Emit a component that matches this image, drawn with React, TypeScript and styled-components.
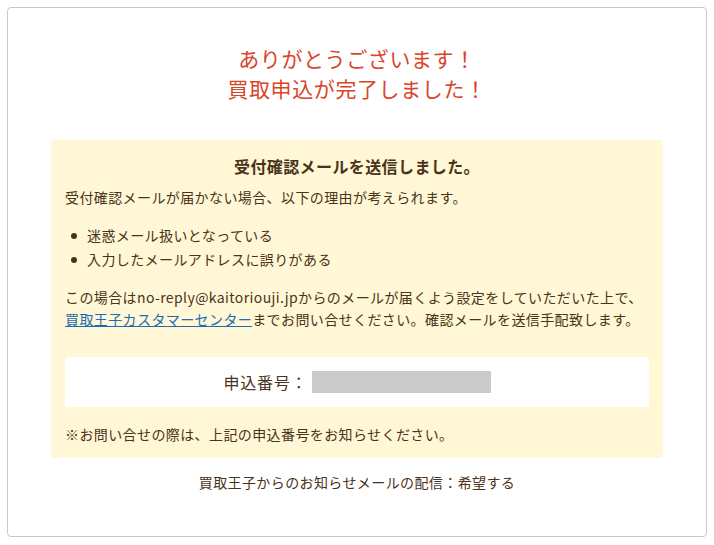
import * as React from 'react'
import styled, { createGlobalStyle } from 'styled-components'

const GlobalStyle = createGlobalStyle`
  body {
    margin: 0;
    background: #fff;
    font-family: "Noto Sans CJK JP", "Noto Sans", sans-serif;
    color: #4a3319;
  }
`

const Page = styled.div`
  padding: 7px;
`

const Card = styled.div`
  width: 698px;
  border: solid 1px #c8c8c8;
  border-radius: 4px;
  padding: 35px 0 43px;
  text-align: center;
  letter-spacing: 0.4px;
`

const Title = styled.h1`
  margin: 0;
  font-size: 21px;
  font-weight: normal;
  line-height: 30px;
  letter-spacing: 0.6px;
  color: #d9452b;
`

const Notice = styled.div`
  margin: 37px 43px 0;
  padding: 14px 14px 13px;
  background: #fff7d6;
  border-radius: 4px;
  text-align: left;
`

const NoticeHeading = styled.h2`
  margin: 0 0 8px;
  font-size: 16px;
  font-weight: bold;
  line-height: 24px;
  text-align: center;
`

const Text = styled.p<{ $gap?: number }>`
  margin: ${(p) => p.$gap ?? 0}px 0 0;
  font-size: 14px;
  line-height: 22px;
  white-space: nowrap;
`

const Reasons = styled.ul`
  margin: 15px 0 0;
  padding: 0;
  list-style: none;
`

const Reason = styled.li`
  position: relative;
  padding-left: 22px;
  font-size: 14px;
  line-height: 24px;

  &::before {
    content: '';
    position: absolute;
    left: 6px;
    top: 10px;
    width: 6px;
    height: 6px;
    border-radius: 50%;
    background: #4a3319;
  }
`

const Link = styled.a`
  color: #1a6db3;
  text-decoration: underline;
`

const NumberBox = styled.div`
  margin-top: 27px;
  height: 50px;
  background: #fff;
  border-radius: 2px;
  display: flex;
  align-items: center;
  justify-content: center;
  font-size: 16px;
  letter-spacing: 0.8px;
`

const Masked = styled.span`
  display: inline-block;
  width: 179px;
  height: 22px;
  margin-left: 4px;
  background: #cbcbcb;
`

const Footer = styled.p`
  margin: 13px 0 0;
  font-size: 14px;
  line-height: 22px;
`

export default function App() {
  return (
    <Page>
      <GlobalStyle />
      <Card>
        <Title>
          ありがとうございます！
          <br />
          買取申込が完了しました！
        </Title>
        <Notice>
          <NoticeHeading>受付確認メールを送信しました。</NoticeHeading>
          <Text>受付確認メールが届かない場合、以下の理由が考えられます。</Text>
          <Reasons>
            <Reason>迷惑メール扱いとなっている</Reason>
            <Reason>入力したメールアドレスに誤りがある</Reason>
          </Reasons>
          <Text $gap={15}>
            この場合はno-reply@kaitoriouji.jpからのメールが届くよう設定をしていただいた上で、
            <br />
            <Link href="#">買取王子カスタマーセンター</Link>までお問い合せください。確認メールを送信手配致します。
          </Text>
          <NumberBox>
            申込番号：<Masked />
          </NumberBox>
          <Text $gap={16}>※お問い合せの際は、上記の申込番号をお知らせください。</Text>
        </Notice>
        <Footer>買取王子からのお知らせメールの配信：希望する</Footer>
      </Card>
    </Page>
  )
}
